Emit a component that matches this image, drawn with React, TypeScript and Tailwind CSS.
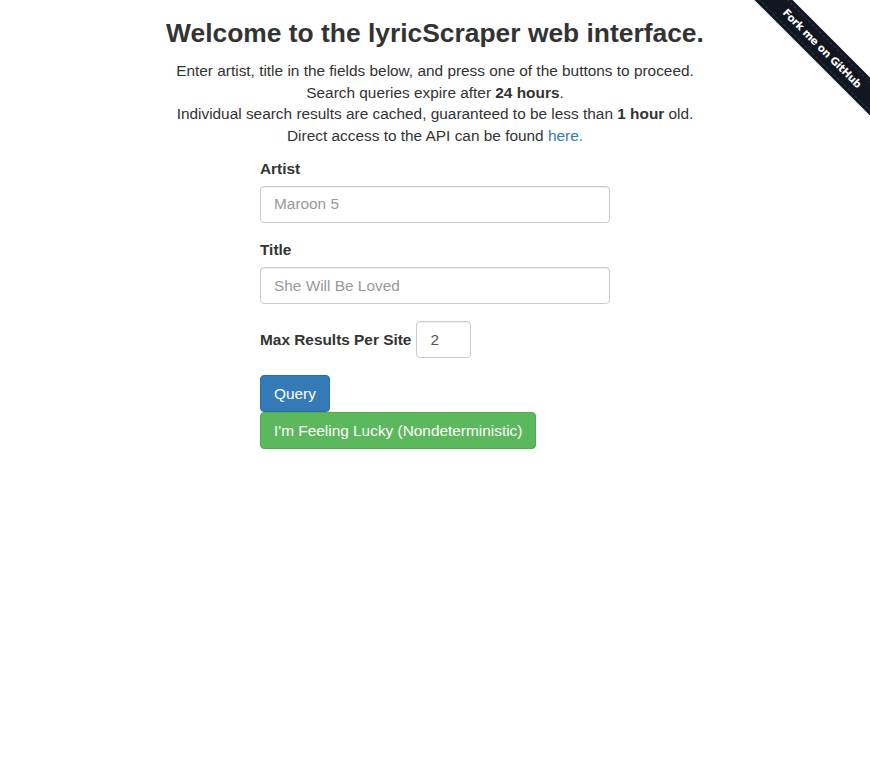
export default function App() {
  return (
    <div className="relative min-h-[772px] bg-white text-[#333] font-['Liberation_Sans',Arial,sans-serif] text-[15.4px] leading-[21.7px]">
      <div className="absolute top-0 right-0 w-[140px] h-[140px] overflow-hidden">
        <div className="absolute left-[-8px] top-[35px] w-[200px] h-[27px] rotate-45 bg-[#121621] flex items-center justify-center">
          <div className="w-full h-[21px] border-y border-dashed border-[#30344a] flex items-center justify-center">
            <span className="text-white text-[10.5px] font-bold font-['DejaVu_Sans',sans-serif] tracking-tight">Fork me on GitHub</span>
          </div>
        </div>
      </div>

      <div className="text-center pt-[18px]">
        <h1 className="text-[26.4px] leading-[31px] font-bold">Welcome to the lyricScraper web interface.</h1>
        <div className="mt-[11px]">
          <p>Enter artist, title in the fields below, and press one of the buttons to proceed.</p>
          <p>Search queries expire after <b>24 hours</b>.</p>
          <p>Individual search results are cached, guaranteed to be less than <b>1 hour</b> old.</p>
          <p>Direct access to the API can be found <a href="#" className="text-[#337ab7]">here.</a></p>
        </div>
      </div>

      <form className="w-[350px] mx-auto mt-[11px]">
        <label className="block font-bold mb-[6px]">Artist</label>
        <input
          placeholder="Maroon 5"
          className="block w-full h-[37px] px-[13px] border border-[#ccc] rounded-[4px] shadow-[inset_0_1px_1px_rgba(0,0,0,0.075)] placeholder:text-[#999] outline-none"
        />
        <label className="block font-bold mt-[16px] mb-[7px]">Title</label>
        <input
          placeholder="She Will Be Loved"
          className="block w-full h-[37px] px-[13px] border border-[#ccc] rounded-[4px] shadow-[inset_0_1px_1px_rgba(0,0,0,0.075)] placeholder:text-[#999] outline-none"
        />
        <div className="flex items-center gap-[5px] mt-[17px]">
          <label className="font-bold">Max Results Per Site</label>
          <input
            defaultValue="2"
            className="w-[55px] h-[37px] px-[13px] border border-[#ccc] rounded-[4px] shadow-[inset_0_1px_1px_rgba(0,0,0,0.075)] text-[#555] outline-none"
          />
        </div>
        <div className="mt-[17px] flex flex-col items-start">
          <button type="button" className="h-[37px] px-[13px] bg-[#337ab7] border border-[#2e6da4] rounded-[4px] text-white">Query</button>
          <button type="button" className="h-[37px] px-[13px] bg-[#5cb85c] border border-[#4cae4c] rounded-[4px] text-white">I'm Feeling Lucky (Nondeterministic)</button>
        </div>
      </form>
    </div>
  )
}
